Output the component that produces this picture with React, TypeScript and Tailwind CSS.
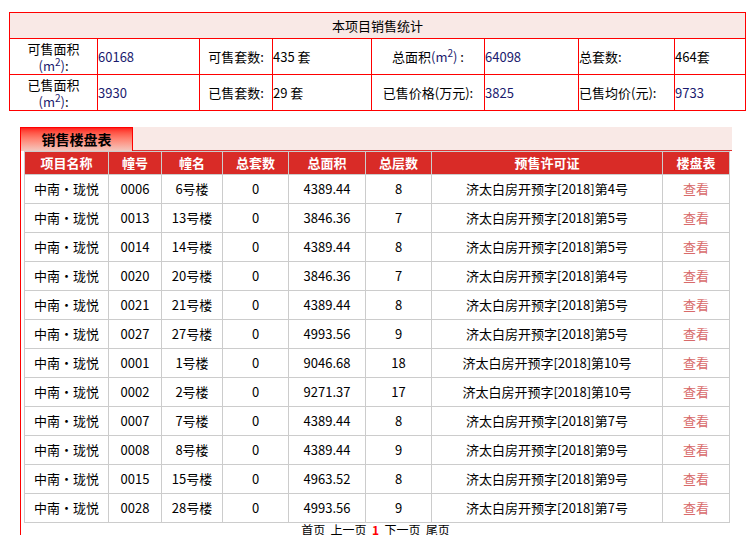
const rows = [
  ["0006","6号楼","4389.44","8","4"],
  ["0013","13号楼","3846.36","7","5"],
  ["0014","14号楼","4389.44","8","5"],
  ["0020","20号楼","3846.36","7","4"],
  ["0021","21号楼","4389.44","8","5"],
  ["0027","27号楼","4993.56","9","5"],
  ["0001","1号楼","9046.68","18","10"],
  ["0002","2号楼","9271.37","17","10"],
  ["0007","7号楼","4389.44","8","7"],
  ["0008","8号楼","4389.44","9","9"],
  ["0015","15号楼","4963.52","8","9"],
  ["0028","28号楼","4993.56","9","7"],
];
const M2 = () => <span className="text-[#1a1a6e]">(m<sup className="text-[10px] leading-none align-[5px] top-0">2</sup>)</span>;
export default function App() {
  const td = "border border-[#ff0000] px-0 h-[36px] text-[13px]";
  return (
    <div className="w-[750px] h-[535px] overflow-hidden bg-white text-black" style={{ fontFamily: '"Noto Sans CJK SC", sans-serif' }}>
      <div className="pt-[12px] pl-[9px]">
        <table className="border-collapse w-[736px] table-fixed">
          <colgroup>
            <col className="w-[88px]"/><col className="w-[102px]"/><col className="w-[73px]"/><col className="w-[99px]"/>
            <col className="w-[113px]"/><col className="w-[94px]"/><col className="w-[96px]"/><col className="w-[71px]"/>
          </colgroup>
          <tbody>
            <tr><td colSpan={8} className="border border-[#ff0000] bg-[#f9e9e6] h-[26px] text-center text-[13px]">本项目销售统计</td></tr>
            <tr>
              <td className={td + " text-center leading-[17px]"}>可售面积<br/><M2/>:</td>
              <td className={td + " text-[#1a1a6e]"}>60168</td>
              <td className={td + " text-center"}>可售套数:</td>
              <td className={td}>435 套</td>
              <td className={td + " text-center"}>总面积<M2/> :</td>
              <td className={td + " text-[#1a1a6e]"}>64098</td>
              <td className={td}>总套数:</td>
              <td className={td}>464套</td>
            </tr>
            <tr>
              <td className={td + " text-center leading-[17px]"}>已售面积<br/><M2/>:</td>
              <td className={td + " text-[#1a1a6e]"}>3930</td>
              <td className={td + " text-center"}>已售套数:</td>
              <td className={td}>29 套</td>
              <td className={td + " text-center"}>已售价格(万元):</td>
              <td className={td + " text-[#1a1a6e]"}>3825</td>
              <td className={td}>已售均价(元):</td>
              <td className={td + " text-[#1a1a6e]"}>9733</td>
            </tr>
          </tbody>
        </table>
      </div>
      <div className="mt-[16px] ml-[20px] border-l border-[#ff0000] h-[420px]">
        <div className="flex h-[24px]">
          <div className="w-[113px] border border-[#ff0000] border-b-0 bg-gradient-to-b from-[#ff1a1a] to-[#f1c8c0] flex items-center justify-center font-bold text-[14px] -ml-px">销售楼盘表</div>
          <div className="w-[599px] bg-[#f9e9e6] border-b border-[#e03030]"></div>
        </div>
        <table className="ml-[3px] border-collapse w-[706px] table-fixed text-[13px]">
          <colgroup>
            <col className="w-[84px]"/><col className="w-[53px]"/><col className="w-[61px]"/><col className="w-[66px]"/>
            <col className="w-[77px]"/><col className="w-[66px]"/><col className="w-[231px]"/><col className="w-[67px]"/>
          </colgroup>
          <thead>
            <tr className="bg-[#d92b27] text-white font-bold h-[23px]">
              {["项目名称","幢号","幢名","总套数","总面积","总层数","预售许可证","楼盘表"].map(h => <th key={h} className="border border-[#cccccc] font-bold text-[13px]">{h}</th>)}
            </tr>
          </thead>
          <tbody>
            {rows.map(r => (
              <tr key={r[0]} className="h-[29px] text-center">
                <td className="border border-[#cccccc]">中南<span className="tracking-[-3px]">·</span> 珑悦</td>
                <td className="border border-[#cccccc]">{r[0]}</td>
                <td className="border border-[#cccccc]">{r[1]}</td>
                <td className="border border-[#cccccc]">0</td>
                <td className="border border-[#cccccc]">{r[2]}</td>
                <td className="border border-[#cccccc]">{r[3]}</td>
                <td className="border border-[#cccccc]">济太白房开预字[2018]第{r[4]}号</td>
                <td className="border border-[#cccccc] text-[#d86a6a]">查看</td>
              </tr>
            ))}
          </tbody>
        </table>
        <div className="text-center text-[12px] leading-[14px] pr-[20px]">首页&nbsp; 上一页 &nbsp;<span className="text-[#ff0000] font-bold">1</span>&nbsp; 下一页&nbsp; 尾页</div>
      </div>
    </div>
  );
}
